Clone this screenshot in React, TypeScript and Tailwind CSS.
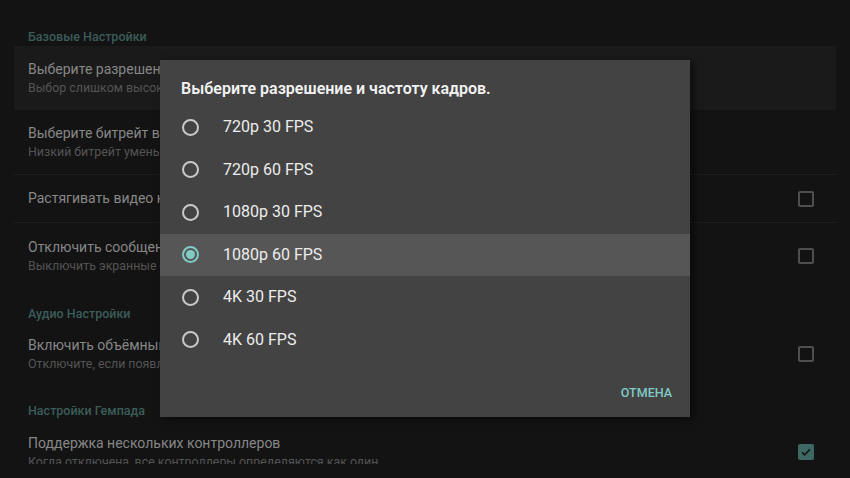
import React from "react";

const font = { fontFamily: "Roboto, 'Noto Sans', sans-serif" };

function SectionHeader({ label, className }: { label: string; className?: string }) {
  return (
    <div className={`px-[14px] text-[12.5px] font-medium leading-[18px] text-[#3b5c59] ${className ?? ""}`}>
      {label}
    </div>
  );
}

function Checkbox({ checked }: { checked?: boolean }) {
  if (checked) {
    return (
      <div className="flex h-[16px] w-[16px] items-center justify-center rounded-[2px] bg-[#3d6863]">
        <svg width="12" height="12" viewBox="0 0 12 12">
          <path d="M2 6.2l2.6 2.6L10 3.4" fill="none" stroke="#131313" strokeWidth="1.6" />
        </svg>
      </div>
    );
  }
  return <div className="h-[16px] w-[16px] rounded-[2px] border-2 border-[#4f4f4f]" />;
}

function Row({
  title,
  sub,
  check,
  checked,
  className,
}: {
  title: string;
  sub?: string;
  check?: boolean;
  checked?: boolean;
  className?: string;
}) {
  return (
    <div className={`flex items-center gap-4 px-[14px] ${className ?? ""}`}>
      <div className="min-w-0 flex-1">
        <div className="truncate text-[14px] leading-[19px] text-[#878787]">{title}</div>
        {sub && <div className="truncate text-[12.4px] leading-[17px] text-[#545454]">{sub}</div>}
      </div>
      {check && (
        <div className="mr-[8px] flex w-[16px] justify-center">
          <Checkbox checked={checked} />
        </div>
      )}
    </div>
  );
}

const options = ["720p 30 FPS", "720p 60 FPS", "1080p 30 FPS", "1080p 60 FPS", "4K 30 FPS", "4K 60 FPS"];

function Radio({ on }: { on: boolean }) {
  if (on) {
    return (
      <div className="flex h-[17px] w-[17px] items-center justify-center rounded-full border-2 border-[#80cbc4]">
        <div className="h-[9px] w-[9px] rounded-full bg-[#80cbc4]" />
      </div>
    );
  }
  return <div className="h-[17px] w-[17px] rounded-full border-2 border-[#c9c9c9]" />;
}

export default function App() {
  return (
    <div className="relative h-[478px] w-[850px] overflow-hidden bg-[#131313]" style={font}>
      <div className="h-[464px] overflow-hidden px-[14px] pt-[28px]">
        <SectionHeader label="Базовые Настройки" />
        <Row
          className="h-[64px] bg-[#1a1a1a]"
          title="Выберите разрешение и частоту кадров"
          sub="Выбор слишком высоких значений для вашего устройства может привести к лагам"
        />
        <Row
          className="h-[65px] border-b border-[#1d1d1d]"
          title="Выберите битрейт видео"
          sub="Низкий битрейт уменьшает задержки, но ухудшает качество изображения"
        />
        <Row className="h-[48px] border-b border-[#1d1d1d]" title="Растягивать видео на весь экран" check />
        <Row
          className="h-[66px]"
          title="Отключить сообщения о подключении"
          sub="Выключить экранные сообщения о качестве соединения"
          check
        />
        <SectionHeader label="Аудио Настройки" className="mt-[16px]" />
        <Row
          className="h-[62px]"
          title="Включить объёмный звук 5.1"
          sub="Отключите, если появляются проблемы со звуком"
          check
        />
        <SectionHeader label="Настройки Гемпада" className="mt-[17px]" />
        <Row
          className="h-[62px] pt-[2px]"
          title="Поддержка нескольких контроллеров"
          sub="Когда отключена, все контроллеры определяются как один."
          check
          checked
        />
      </div>

      <div className="absolute left-[160px] top-[60px] flex h-[357px] w-[530px] flex-col bg-[#434343] shadow-[4px_2px_8px_rgba(0,0,0,0.5)]">
        <div className="px-[21px] pt-[18px] text-[16px] font-semibold leading-[22px] text-[#f2f2f2]">
          Выберите разрешение и частоту кадров.
        </div>
        <div className="mt-[6px] flex flex-col">
          {options.map((o, i) => (
            <div
              key={o}
              className={`flex h-[42.5px] items-center pl-[22px] ${i === 3 ? "bg-[#565656]" : ""}`}
            >
              <Radio on={i === 3} />
              <span className="ml-[24px] text-[16px] text-[#ececec]">{o}</span>
            </div>
          ))}
        </div>
        <div className="mt-auto flex justify-end px-[18px] pb-[14px]">
          <span className="text-[12.5px] font-medium text-[#80cbc4]">ОТМЕНА</span>
        </div>
      </div>
    </div>
  );
}
